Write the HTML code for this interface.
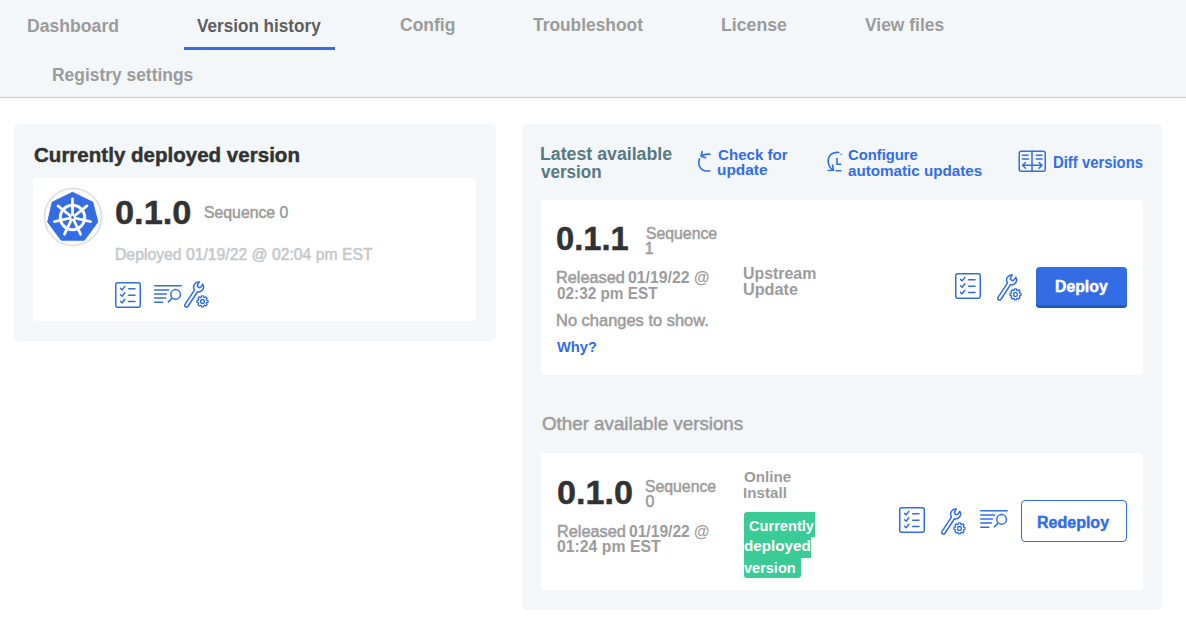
<!DOCTYPE html>
<html><head><meta charset="utf-8"><style>
html,body{margin:0;padding:0;width:1186px;height:640px;overflow:hidden;background:#fff;position:relative}
body{font-family:"Liberation Sans",sans-serif}
.t{position:absolute;white-space:nowrap;line-height:1;transform-origin:0 0}
</style></head><body>
<div style="position:absolute;left:0;top:0;width:1186px;height:97px;background:#f3f7f9;border-bottom:1px solid #c9cdd0"></div>
<div style="position:absolute;left:184px;top:47px;width:151px;height:3px;background:#326de6"></div>
<div style="position:absolute;left:14px;top:124px;width:481.5px;height:217px;background:#f3f7f9;border-radius:5px"></div>
<div style="position:absolute;left:33px;top:178px;width:443px;height:143px;background:#fff;border-radius:4px"></div>
<svg style="position:absolute;left:43px;top:187px" width="60" height="60" viewBox="0 0 60 60">
<circle cx="30" cy="30" r="28.5" fill="#fff" stroke="#e3e3e3" stroke-width="2"/>
<path d="M29.5 5.3 L49.8 15.2 L54.8 35 L41.4 53.2 L18.2 53.2 L4.7 35 L9.2 15.2 Z" fill="#326de6" stroke="#326de6" stroke-width="1" stroke-linejoin="round"/>
<g stroke="#fff" stroke-linecap="round" fill="none">
<circle cx="29.5" cy="30.5" r="12.2" stroke-width="3"/>
<g stroke-width="2.8">
<line x1="29.5" y1="30.5" x2="29.5" y2="12"/>
<line x1="29.5" y1="30.5" x2="29.5" y2="12" transform="rotate(51.43 29.5 30.5)"/>
<line x1="29.5" y1="30.5" x2="29.5" y2="12" transform="rotate(102.86 29.5 30.5)"/>
<line x1="29.5" y1="30.5" x2="29.5" y2="12" transform="rotate(154.29 29.5 30.5)"/>
<line x1="29.5" y1="30.5" x2="29.5" y2="12" transform="rotate(205.71 29.5 30.5)"/>
<line x1="29.5" y1="30.5" x2="29.5" y2="12" transform="rotate(257.14 29.5 30.5)"/>
<line x1="29.5" y1="30.5" x2="29.5" y2="12" transform="rotate(308.57 29.5 30.5)"/>
</g></g>
<circle cx="29.5" cy="30.5" r="3.4" fill="#fff"/>
<circle cx="29.5" cy="30.5" r="1.4" fill="#326de6"/>
</svg>
<svg style="position:absolute;left:115px;top:281.7px" width="27" height="27" viewBox="0 0 27 27" fill="none" stroke="#326de6" stroke-width="1.5" stroke-linecap="round" stroke-linejoin="round">
<rect x="0.75" y="0.75" width="24.5" height="24.5" rx="2"/>
<path d="M5.5 6.4l1.7 1.5l2.6-3.5M5.5 12.8l1.7 1.5l2.6-3.5M5.5 19.2l1.7 1.5l2.6-3.5M13.6 6.8h6.4M13.6 13.2h6.4M13.6 19.6h6.4"/>
</svg>
<svg style="position:absolute;left:154px;top:284.5px" width="28" height="19" viewBox="0 0 28 19" fill="none" stroke="#326de6" stroke-width="1.5" stroke-linecap="round">
<path d="M0.75 0.75H27.2M0.75 4.9H14.6M0.75 9.1H12.4M0.75 13.1H11.5M0.75 17.3H8.7M14.4 16.9L17.9 13.4"/>
<circle cx="21.6" cy="9.4" r="4.8"/>
</svg>
<svg style="position:absolute;left:184px;top:281px" width="26" height="27" viewBox="0 0 26 27" fill="none" stroke="#326de6" stroke-width="1.5" stroke-linejoin="round" stroke-linecap="round">
<path transform="translate(14.6 5.9) rotate(33.4)" d="M-1.75 4.65 L-1.75 22 A1.75 1.75 0 0 0 1.75 22 L1.75 4.65 A5 5 0 0 0 2.1 -4.54 L2.1 -1.8 A2.1 2.1 0 0 1 -2.1 -1.8 L-2.1 -4.54 A5 5 0 0 0 -1.75 4.65Z"/>
<path transform="translate(18.5 20.4)" d="M-1.32 -4.09 L-0.96 -5.52 L0.96 -5.52 L1.32 -4.09 L1.96 -3.83 L3.22 -4.58 L4.58 -3.22 L3.83 -1.96 L4.09 -1.32 L5.52 -0.96 L5.52 0.96 L4.09 1.32 L3.83 1.96 L4.58 3.22 L3.22 4.58 L1.96 3.83 L1.32 4.09 L0.96 5.52 L-0.96 5.52 L-1.32 4.09 L-1.96 3.83 L-3.22 4.58 L-4.58 3.22 L-3.83 1.96 L-4.09 1.32 L-5.52 0.96 L-5.52 -0.96 L-4.09 -1.32 L-3.83 -1.96 L-4.58 -3.22 L-3.22 -4.58 L-1.96 -3.83Z" stroke-width="1.3"/>
<circle cx="18.5" cy="20.4" r="1.9" stroke-width="1.3"/>
</svg>
<div style="position:absolute;left:522px;top:124px;width:640px;height:485.7px;background:#f3f7f9;border-radius:5px"></div>
<svg style="position:absolute;left:695px;top:148px" width="18" height="26" viewBox="0 0 18 26" fill="none" stroke="#326de6" stroke-width="1.6" stroke-linecap="round" stroke-linejoin="round">
<path d="M7.2 3.5L6 8.2L10.6 9.7M6.2 8.2C8.5 6.6 11.5 5.8 15 6.3"/>
<path d="M4.5 10.8C2.4 15 4 21.5 10.5 23 L14.8 23"/>
</svg>
<svg style="position:absolute;left:824px;top:148px" width="20" height="26" viewBox="0 0 20 26" fill="none" stroke="#326de6" stroke-width="1.6" stroke-linecap="round" stroke-linejoin="round">
<path d="M14.8 4.5C8 3.5 3.5 8 4.3 14.5C4.6 17.5 6.5 20.5 9.3 22.2"/>
<path d="M8.5 17L9.5 22.2L4.3 22.5"/>
<path d="M13 10.5V16.2H16.8M12 22.7H16.8"/>
<circle cx="17" cy="6.3" r="0.5" stroke-width="1" opacity="0.5"/>
</svg>
<svg style="position:absolute;left:1018px;top:150px" width="29" height="23" viewBox="0 0 29 23" fill="none" stroke="#326de6" stroke-width="1.5" stroke-linecap="round" stroke-linejoin="round">
<rect x="1.25" y="1.25" width="26" height="20" rx="2"/>
<path d="M14 1.25V21.25M4.4 5.3H10M4.4 9H10.5M18.3 5.3H24M18.3 9H24M4.5 15.3H24M7.5 12.5L4.5 15.3L7.5 18.2M21 12.5L24 15.3L21 18.2"/>
</svg>
<div style="position:absolute;left:541px;top:199.5px;width:601.5px;height:175.7px;background:#fff;border-radius:4px"></div>
<svg style="position:absolute;left:955px;top:273px" width="27" height="27" viewBox="0 0 27 27" fill="none" stroke="#326de6" stroke-width="1.5" stroke-linecap="round" stroke-linejoin="round">
<rect x="0.75" y="0.75" width="24.5" height="24.5" rx="2"/>
<path d="M5.5 6.4l1.7 1.5l2.6-3.5M5.5 12.8l1.7 1.5l2.6-3.5M5.5 19.2l1.7 1.5l2.6-3.5M13.6 6.8h6.4M13.6 13.2h6.4M13.6 19.6h6.4"/>
</svg>
<svg style="position:absolute;left:997px;top:274px" width="26" height="27" viewBox="0 0 26 27" fill="none" stroke="#326de6" stroke-width="1.5" stroke-linejoin="round" stroke-linecap="round">
<path transform="translate(14.6 5.9) rotate(33.4)" d="M-1.75 4.65 L-1.75 22 A1.75 1.75 0 0 0 1.75 22 L1.75 4.65 A5 5 0 0 0 2.1 -4.54 L2.1 -1.8 A2.1 2.1 0 0 1 -2.1 -1.8 L-2.1 -4.54 A5 5 0 0 0 -1.75 4.65Z"/>
<path transform="translate(18.5 20.4)" d="M-1.32 -4.09 L-0.96 -5.52 L0.96 -5.52 L1.32 -4.09 L1.96 -3.83 L3.22 -4.58 L4.58 -3.22 L3.83 -1.96 L4.09 -1.32 L5.52 -0.96 L5.52 0.96 L4.09 1.32 L3.83 1.96 L4.58 3.22 L3.22 4.58 L1.96 3.83 L1.32 4.09 L0.96 5.52 L-0.96 5.52 L-1.32 4.09 L-1.96 3.83 L-3.22 4.58 L-4.58 3.22 L-3.83 1.96 L-4.09 1.32 L-5.52 0.96 L-5.52 -0.96 L-4.09 -1.32 L-3.83 -1.96 L-4.58 -3.22 L-3.22 -4.58 L-1.96 -3.83Z" stroke-width="1.3"/>
<circle cx="18.5" cy="20.4" r="1.9" stroke-width="1.3"/>
</svg>
<div style="position:absolute;left:1036px;top:267px;width:91px;height:41px;background:#326de6;border-radius:4px;box-shadow:inset 0 -2.5px 0 #2755b5"></div>
<div style="position:absolute;left:541px;top:452.5px;width:601.5px;height:137px;background:#fff;border-radius:4px"></div>
<div style="position:absolute;left:743.5px;top:512px;width:71.2px;height:24.5px;background:#3acb96;border-radius:3px 0 0 0"></div>
<div style="position:absolute;left:743.5px;top:536px;width:67.4px;height:21.5px;background:#3acb96"></div>
<div style="position:absolute;left:743.5px;top:557px;width:57.1px;height:21.2px;background:#3acb96;border-radius:0 0 3px 3px"></div>
<svg style="position:absolute;left:899px;top:507px" width="27" height="27" viewBox="0 0 27 27" fill="none" stroke="#326de6" stroke-width="1.5" stroke-linecap="round" stroke-linejoin="round">
<rect x="0.75" y="0.75" width="24.5" height="24.5" rx="2"/>
<path d="M5.5 6.4l1.7 1.5l2.6-3.5M5.5 12.8l1.7 1.5l2.6-3.5M5.5 19.2l1.7 1.5l2.6-3.5M13.6 6.8h6.4M13.6 13.2h6.4M13.6 19.6h6.4"/>
</svg>
<svg style="position:absolute;left:941px;top:507.5px" width="26" height="27" viewBox="0 0 26 27" fill="none" stroke="#326de6" stroke-width="1.5" stroke-linejoin="round" stroke-linecap="round">
<path transform="translate(14.6 5.9) rotate(33.4)" d="M-1.75 4.65 L-1.75 22 A1.75 1.75 0 0 0 1.75 22 L1.75 4.65 A5 5 0 0 0 2.1 -4.54 L2.1 -1.8 A2.1 2.1 0 0 1 -2.1 -1.8 L-2.1 -4.54 A5 5 0 0 0 -1.75 4.65Z"/>
<path transform="translate(18.5 20.4)" d="M-1.32 -4.09 L-0.96 -5.52 L0.96 -5.52 L1.32 -4.09 L1.96 -3.83 L3.22 -4.58 L4.58 -3.22 L3.83 -1.96 L4.09 -1.32 L5.52 -0.96 L5.52 0.96 L4.09 1.32 L3.83 1.96 L4.58 3.22 L3.22 4.58 L1.96 3.83 L1.32 4.09 L0.96 5.52 L-0.96 5.52 L-1.32 4.09 L-1.96 3.83 L-3.22 4.58 L-4.58 3.22 L-3.83 1.96 L-4.09 1.32 L-5.52 0.96 L-5.52 -0.96 L-4.09 -1.32 L-3.83 -1.96 L-4.58 -3.22 L-3.22 -4.58 L-1.96 -3.83Z" stroke-width="1.3"/>
<circle cx="18.5" cy="20.4" r="1.9" stroke-width="1.3"/>
</svg>
<svg style="position:absolute;left:980px;top:510px" width="28" height="19" viewBox="0 0 28 19" fill="none" stroke="#326de6" stroke-width="1.5" stroke-linecap="round">
<path d="M0.75 0.75H27.2M0.75 4.9H14.6M0.75 9.1H12.4M0.75 13.1H11.5M0.75 17.3H8.7M14.4 16.9L17.9 13.4"/>
<circle cx="21.6" cy="9.4" r="4.8"/>
</svg>
<div style="position:absolute;left:1020.5px;top:500.3px;width:104.3px;height:39.4px;border:1.2px solid #326de6;border-radius:4px;background:#fff"></div>
<div id="tab1" class="t" style="left:27.10px;top:16.55px;font-size:18.8px;font-weight:700;color:#9b9b9b;transform:scaleX(0.9378)">Dashboard</div>
<div id="tab2" class="t" style="left:197.20px;top:16.65px;font-size:18.8px;font-weight:700;color:#5e5e5e;transform:scaleX(0.9113)">Version history</div>
<div id="tab3" class="t" style="left:399.80px;top:16.35px;font-size:18.8px;font-weight:700;color:#9b9b9b;transform:scaleX(0.9318)">Config</div>
<div id="tab4" class="t" style="left:533.00px;top:16.35px;font-size:18.8px;font-weight:700;color:#9b9b9b;transform:scaleX(0.9244)">Troubleshoot</div>
<div id="tab5" class="t" style="left:720.50px;top:16.35px;font-size:18.8px;font-weight:700;color:#9b9b9b;transform:scaleX(0.9420)">License</div>
<div id="tab6" class="t" style="left:864.60px;top:16.35px;font-size:18.8px;font-weight:700;color:#9b9b9b;transform:scaleX(0.9287)">View files</div>
<div id="tab7" class="t" style="left:52.40px;top:65.65px;font-size:18.8px;font-weight:700;color:#9b9b9b;transform:scaleX(0.9268)">Registry settings</div>
<div id="cdv" class="t" style="left:34.10px;top:145.44px;font-size:20.2px;font-weight:700;color:#323232;transform:scaleX(1.0174);-webkit-text-stroke:0.45px #323232">Currently deployed version</div>
<div id="v1" class="t" style="left:114.75px;top:195.67px;font-size:33.2px;font-weight:700;color:#323232;transform:scaleX(1.0358);-webkit-text-stroke:0.45px #323232">0.1.0</div>
<div id="seq0" class="t" style="left:203.70px;top:205.26px;font-size:15.6px;font-weight:400;color:#9b9b9b;transform:scaleX(1.0129);-webkit-text-stroke:0.5px #9b9b9b">Sequence 0</div>
<div id="dep" class="t" style="left:114.75px;top:247.46px;font-size:15.6px;font-weight:400;color:#c4c8ca;transform:scaleX(1.0099);-webkit-text-stroke:0.5px #c4c8ca">Deployed 01/19/22 @ 02:04 pm EST</div>
<div id="lav" class="t" style="left:540.40px;top:146.10px;font-size:17.6px;font-weight:700;color:#577981;transform:scaleX(1.0079)">Latest available</div>
<div id="lav2" class="t" style="left:541.40px;top:163.80px;font-size:17.6px;font-weight:700;color:#577981;transform:scaleX(0.9682)">version</div>
<div id="chk" class="t" style="left:717.60px;top:147.13px;font-size:15.1px;font-weight:700;color:#326de6;transform:scaleX(1.0009)">Check for</div>
<div id="chk2" class="t" style="left:716.60px;top:161.63px;font-size:15.1px;font-weight:700;color:#326de6;transform:scaleX(1.0222)">update</div>
<div id="cfg" class="t" style="left:848.20px;top:147.32px;font-size:15.2px;font-weight:700;color:#326de6;transform:scaleX(0.9736)">Configure</div>
<div id="cfg2" class="t" style="left:848.20px;top:162.92px;font-size:15.2px;font-weight:700;color:#326de6;transform:scaleX(1.0002)">automatic updates</div>
<div id="diff" class="t" style="left:1053.00px;top:153.69px;font-size:16.2px;font-weight:700;color:#326de6;transform:scaleX(0.9180)">Diff versions</div>
<div id="v2" class="t" style="left:555.80px;top:222.47px;font-size:33.2px;font-weight:700;color:#323232;transform:scaleX(0.9866);-webkit-text-stroke:0.45px #323232">0.1.1</div>
<div id="seq1" class="t" style="left:645.80px;top:225.51px;font-size:16px;font-weight:400;color:#9b9b9b;transform:scaleX(0.9867);-webkit-text-stroke:0.5px #9b9b9b">Sequence</div>
<div id="seq1b" class="t" style="left:644.80px;top:240.81px;font-size:16px;font-weight:400;color:#9b9b9b;transform:scaleX(1.0000);-webkit-text-stroke:0.5px #9b9b9b">1</div>
<div id="rel1" class="t" style="left:556.10px;top:270.34px;font-size:15.8px;font-weight:400;color:#9b9b9b;transform:scaleX(1.0313);-webkit-text-stroke:0.5px #9b9b9b">Released</div>
<div id="rel1b" class="t" style="left:627.90px;top:270.34px;font-size:15.8px;font-weight:700;color:#9b9b9b;transform:scaleX(1.0008)">01/19/22 @</div>
<div id="rel1c" class="t" style="left:557.10px;top:285.74px;font-size:15.8px;font-weight:700;color:#9b9b9b;transform:scaleX(0.9711)">02:32 pm EST</div>
<div id="ups" class="t" style="left:743.00px;top:266.23px;font-size:15.9px;font-weight:700;color:#9b9b9b;transform:scaleX(1.0005)">Upstream</div>
<div id="ups2" class="t" style="left:743.00px;top:281.73px;font-size:15.9px;font-weight:700;color:#9b9b9b;transform:scaleX(1.0197)">Update</div>
<div id="noch" class="t" style="left:555.80px;top:313.34px;font-size:15.8px;font-weight:400;color:#9b9b9b;transform:scaleX(1.0418);-webkit-text-stroke:0.5px #9b9b9b">No changes to show.</div>
<div id="why" class="t" style="left:557.20px;top:339.19px;font-size:15.4px;font-weight:700;color:#326de6;transform:scaleX(0.9535)">Why?</div>
<div id="dpl" class="t" style="left:1054.90px;top:279.44px;font-size:15.8px;font-weight:700;color:#fff;transform:scaleX(1.0008);-webkit-text-stroke:0.45px #fff">Deploy</div>
<div id="oav" class="t" style="left:541.60px;top:415.42px;font-size:18.2px;font-weight:400;color:#9b9b9b;transform:scaleX(1.0311);-webkit-text-stroke:0.5px #9b9b9b">Other available versions</div>
<div id="v3" class="t" style="left:556.50px;top:475.57px;font-size:33.2px;font-weight:700;color:#323232;transform:scaleX(1.0286);-webkit-text-stroke:0.45px #323232">0.1.0</div>
<div id="seq2" class="t" style="left:645.40px;top:479.21px;font-size:16px;font-weight:400;color:#9b9b9b;transform:scaleX(0.9867);-webkit-text-stroke:0.5px #9b9b9b">Sequence</div>
<div id="seq2b" class="t" style="left:645.40px;top:494.21px;font-size:16px;font-weight:400;color:#9b9b9b;transform:scaleX(1.0000);-webkit-text-stroke:0.5px #9b9b9b">0</div>
<div id="rel2" class="t" style="left:556.50px;top:523.54px;font-size:15.8px;font-weight:400;color:#9b9b9b;transform:scaleX(1.0313);-webkit-text-stroke:0.5px #9b9b9b">Released</div>
<div id="rel2b" class="t" style="left:628.80px;top:523.54px;font-size:15.8px;font-weight:700;color:#9b9b9b;transform:scaleX(0.9880)">01/19/22 @</div>
<div id="rel2c" class="t" style="left:557.00px;top:539.24px;font-size:15.8px;font-weight:700;color:#9b9b9b;transform:scaleX(1.0000)">01:24 pm EST</div>
<div id="onl" class="t" style="left:744.00px;top:469.22px;font-size:15.2px;font-weight:700;color:#9b9b9b;transform:scaleX(1.0005)">Online</div>
<div id="onl2" class="t" style="left:743.00px;top:484.82px;font-size:15.2px;font-weight:700;color:#9b9b9b;transform:scaleX(1.0000)">Install</div>
<div id="cur" class="t" style="left:748.70px;top:519.19px;font-size:14.6px;font-weight:700;color:#fff;transform:scaleX(1.0011)">Currently</div>
<div id="cur2" class="t" style="left:744.20px;top:539.49px;font-size:14.6px;font-weight:700;color:#fff;transform:scaleX(1.0427)">deployed</div>
<div id="cur3" class="t" style="left:744.20px;top:560.79px;font-size:14.6px;font-weight:700;color:#fff;transform:scaleX(0.9947)">version</div>
<div id="rdp" class="t" style="left:1037.40px;top:515.11px;font-size:16px;font-weight:700;color:#326de6;transform:scaleX(1.0005);-webkit-text-stroke:0.45px #326de6">Redeploy</div>
</body></html>
